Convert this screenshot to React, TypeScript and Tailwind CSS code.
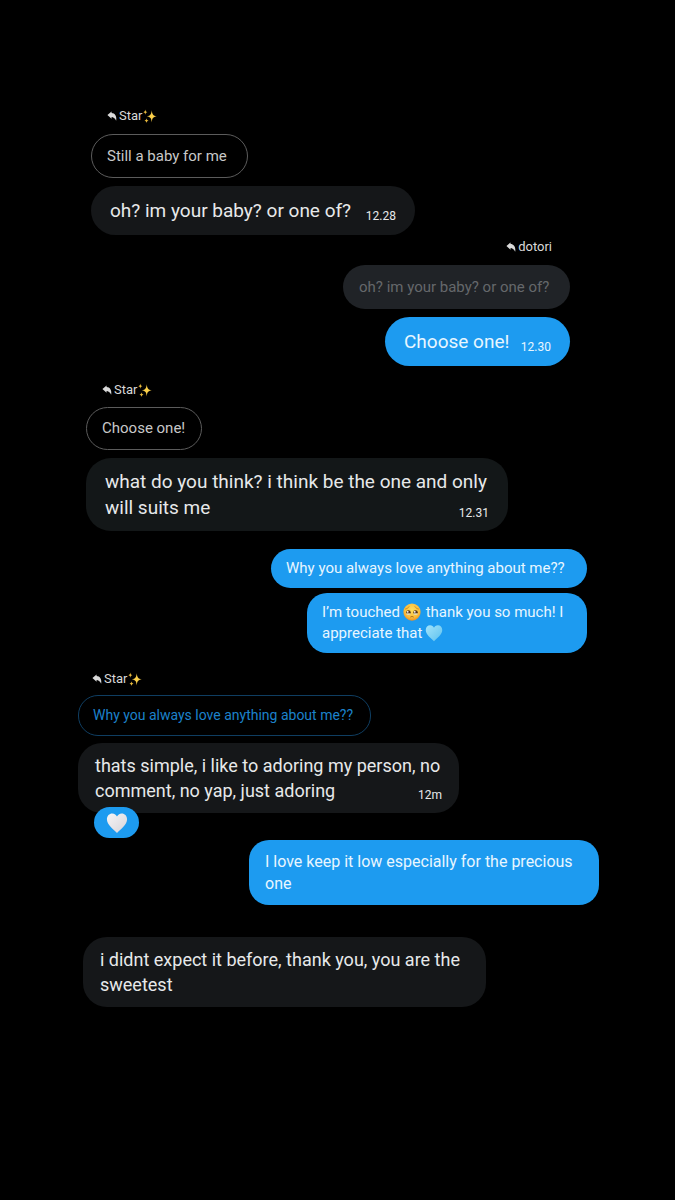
import type { ReactNode } from 'react';
import clsx from 'clsx';

function ReplyArrow() {
  return (
    <svg viewBox="0 0 24 24" className="w-[10px] h-[10px] shrink-0" fill="currentColor" aria-hidden="true">
      <path d="M11 1 1 9.500l10 9v-4c4 0 8 3 11 9C24 13 19 4.500 11 4.500Z" />
    </svg>
  );
}

function Sparkles() {
  return (
    <svg viewBox="0 0 24 24" className="ml-px w-[14px] h-[14px] shrink-0" aria-hidden="true">
      <path fill="#fbd04a" d="M15 2c.8 7 2 9.200 8.500 10.500C17 13.800 15.800 16 15 23c-.8-7-2-9.200-8.500-10.500C13 11.200 14.200 9 15 2Z" />
      <path fill="#e8b93c" d="M4 1c.4 3 1 4 3.500 4.500C5 6 4.400 7 4 10 3.600 7 3 6 .5 5.500 3 5 3.600 4 4 1Z" />
      <path fill="#e8b93c" d="M6 16c.4 2.500 1 3.500 3.500 4-2.500.5-3.100 1.500-3.500 4-.4-2.500-1-3.500-3.500-4 2.500-.5 3.100-1.500 3.500-4Z" />
    </svg>
  );
}

function TearyFace() {
  return (
    <svg viewBox="0 0 24 24" className="inline-block w-[18px] h-[18px] ml-[3px] mr-px align-[-4px]" role="img" aria-label="touched">
      <defs>
        <radialGradient id="face" cx="50%" cy="38%" r="62%">
          <stop offset="0" stopColor="#ffdf5e" />
          <stop offset="0.7" stopColor="#fbbd3a" />
          <stop offset="1" stopColor="#ea8f24" />
        </radialGradient>
      </defs>
      <circle cx="12" cy="12" r="11.500" fill="url(#face)" />
      <path d="M3.500 8C5.500 7.500 7 6.500 8 5M20.500 8C18.500 7.500 17 6.500 16 5" fill="none" stroke="#b8741f" strokeWidth="1" strokeLinecap="round" />
      <ellipse cx="7.300" cy="12.500" rx="3" ry="2.800" fill="#54341c" />
      <ellipse cx="16.700" cy="12.500" rx="3" ry="2.800" fill="#54341c" />
      <path d="M4 14.200c1.800-.8 4.600-.8 6.400 0-.8 2.200-5.400 2.400-6.400 0ZM13.600 14.200c1.800-.8 4.600-.8 6.400 0-1 2.400-5.600 2.200-6.400 0Z" fill="#e3d9b4" />
      <circle cx="6.300" cy="11.800" r="1.200" fill="#fff" />
      <circle cx="15.700" cy="11.800" r="1.200" fill="#fff" />
      <path d="M10.300 18.500c1-.7 2.400-.7 3.400 0" fill="none" stroke="#8a4b12" strokeWidth="1" strokeLinecap="round" />
    </svg>
  );
}

function Heart({ id, from, to, label, className }: { id: string; from: string; to: string; label: string; className?: string }) {
  return (
    <svg viewBox="0 0 24 24" className={className} role="img" aria-label={label}>
      <defs>
        <linearGradient id={id} x1="0" y1="0" x2="1" y2="1">
          <stop offset="0" stopColor={from} />
          <stop offset="1" stopColor={to} />
        </linearGradient>
      </defs>
      <path fill={`url(#${id})`} d="M12 23C8 19 1 14 1 8 1 4 3.700 1.500 6.800 1.500 9.300 1.500 11.200 3 12 5c.8-2 2.700-3.500 5.200-3.500C20.300 1.500 23 4 23 8c0 6-7 11-11 15Z" />
    </svg>
  );
}

function ReplyLabel({ name, sparkle, className }: { name: string; sparkle?: boolean; className?: string }) {
  return (
    <div className={clsx('flex h-4 items-center text-[13px] leading-4 text-[#d9d9d9]', className)}>
      <ReplyArrow />
      <span className="ml-0.5">{name}</span>
      {sparkle && <Sparkles />}
    </div>
  );
}

// The time sits at the end of the last line
function Bubble({ className, time, first, children }: { className: string; time?: string; first?: ReactNode; children: ReactNode }) {
  return (
    <div className={clsx('max-w-full whitespace-pre', className)}>
      {first && <p>{first}</p>}
      <div className="flex items-end justify-between">
        <p>{children}</p>
        {time && <time className="shrink-0 text-[12px] leading-4">{time}</time>}
      </div>
    </div>
  );
}

export default function App() {
  return (
    <main className="min-h-screen bg-black pt-[108px] pb-16 font-['Roboto','Liberation_Sans',sans-serif] text-[#e7e9ea]">
      <section className="flex flex-col items-start pl-[91px]">
        <ReplyLabel name="Star" sparkle className="ml-4 mb-[10px]" />
        <Bubble className="w-[157px] rounded-[22px] border border-[#5c5c5c] px-[15px] py-[10px] text-[15px] leading-[22px] text-[#c8c8c8]">
          Still a baby for me
        </Bubble>
        <Bubble
          time="12.28"
          className="mt-2 w-[324px] rounded-[25px] bg-[#151719] px-[19px] pt-3 pb-[11px] text-[19px] leading-[26px]"
        >
          oh? im your baby? or one of?
        </Bubble>
      </section>

      <section className="mt-1 flex flex-col items-end pr-[105px]">
        <ReplyLabel name="dotori" className="mr-[18px] mb-[10px]" />
        <Bubble className="w-[227px] rounded-[22px] bg-[#202327] px-4 py-[11px] text-[15px] leading-[22px] text-[#65686b]">
          oh? im your baby? or one of?
        </Bubble>
        <Bubble
          time="12.30"
          className="mt-2 w-[185px] rounded-[25px] bg-[#1d9bf0] px-[19px] pt-3 pb-[11px] text-[19px] leading-[26px] text-[#e8f6ff]"
        >
          Choose one!
        </Bubble>
      </section>

      <section className="mt-4 flex flex-col items-start pl-[86px]">
        <ReplyLabel name="Star" sparkle className="ml-4 mb-[9px]" />
        <Bubble className="w-[116px] rounded-[22px] border border-[#5c5c5c] px-[15px] pt-[9px] pb-[10px] text-[15px] leading-[22px] text-[#c8c8c8]">
          Choose one!
        </Bubble>
        <Bubble
          time="12.31"
          first="what do you think? i think be the one and only"
          className="mt-2 w-[422px] rounded-[25px] bg-[#131718] px-[19px] pt-[11px] pb-[10px] text-[19px] leading-[26px]"
        >
          will suits me
        </Bubble>
      </section>

      <section className="mt-[18px] flex flex-col items-end gap-[5px] pr-[88px] text-[15px] leading-[21px] text-[#e8f6ff]">
        <Bubble className="w-[316px] rounded-[20px] bg-[#1d9bf0] px-[15px] py-[9px]">
          Why you always love anything about me??
        </Bubble>
        <Bubble
          first={<>I’m touched<TearyFace /> thank you so much! I</>}
          className="w-[280px] rounded-[20px] bg-[#1d9bf0] px-[15px] py-[9px]"
        >
          appreciate that
          <Heart id="heart-blue" from="#a4e4fb" to="#5cc1ee" label="light blue heart" className="ml-[3px] inline-block h-[18px] w-[18px] align-[-4px]" />
        </Bubble>
      </section>

      <section className="mt-[18px] flex flex-col items-start pl-[78px]">
        <ReplyLabel name="Star" sparkle className="ml-[14px] mb-2" />
        <Bubble className="w-[293px] rounded-[20px] border border-[#0f3e62] px-[14px] pt-2 pb-[9px] text-[14px] leading-[22px] text-[#1c82cb]">
          Why you always love anything about me??
        </Bubble>
        <div className="relative mt-[7px]">
          <Bubble
            time="12m"
            first="thats simple, i like to adoring my person, no"
            className="w-[381px] rounded-[24px] bg-[#151719] px-[17px] py-[10px] text-[18px] leading-[25px]"
          >
            comment, no yap, just adoring
          </Bubble>
          <button
            type="button"
            className="absolute top-16 left-4 flex h-[31px] w-[45px] items-center justify-center rounded-full bg-[#1d9bf0]"
          >
            <Heart id="heart-white" from="#f7f5f6" to="#d6d3d9" label="white heart" className="h-[22px] w-[22px]" />
          </button>
        </div>
      </section>

      <section className="mt-[27px] flex flex-col items-end pr-[76px]">
        <Bubble
          first="I love keep it low especially for the precious"
          className="w-[350px] rounded-[20px] bg-[#1d9bf0] px-4 pt-[11px] pb-[10px] text-[16px] leading-[22px] text-[#e8f6ff]"
        >
          one
        </Bubble>
      </section>

      <section className="mt-8 flex flex-col items-start pl-[83px]">
        <Bubble
          first="i didnt expect it before, thank you, you are the"
          className="w-[403px] rounded-[24px] bg-[#151719] px-[17px] py-[10px] text-[18px] leading-[25px]"
        >
          sweetest
        </Bubble>
      </section>
    </main>
  );
}
